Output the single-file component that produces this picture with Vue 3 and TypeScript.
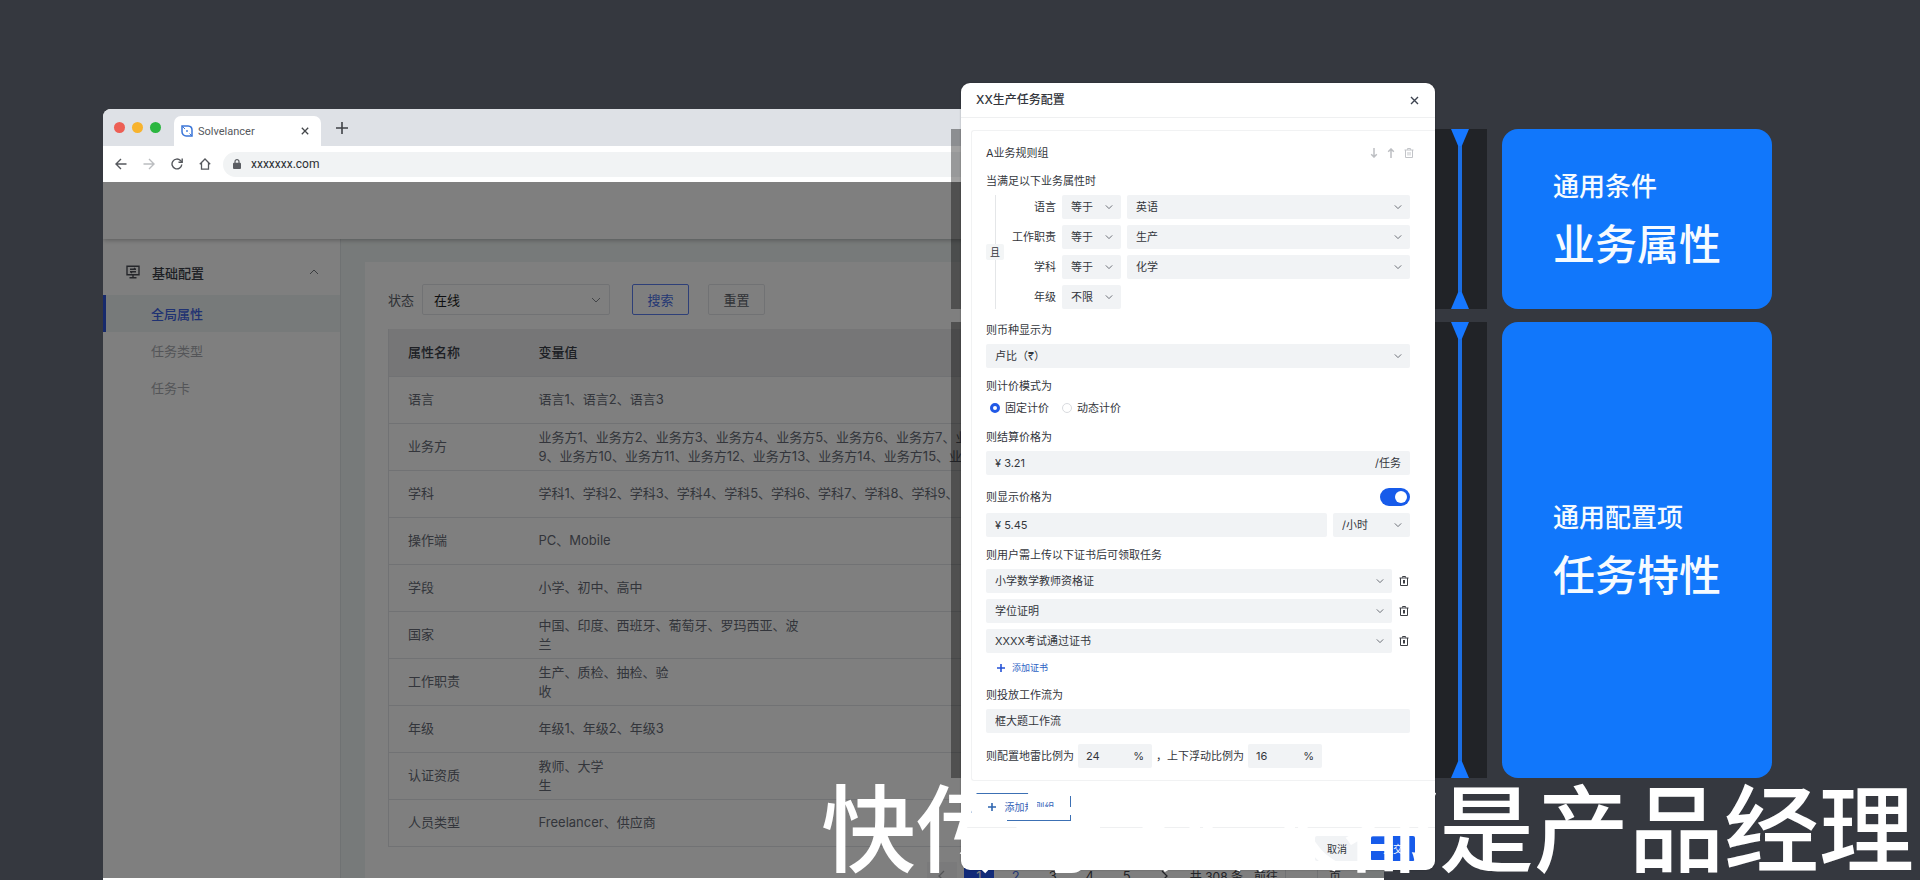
<script setup lang="ts">
import { ref } from 'vue'

interface AttributeRow { name: string; lines: string[] }
interface Condition { id: string; label: string; op: string; value?: string }

const menu = ['全局属性', '任务类型', '任务卡']

const attributes: AttributeRow[] = [
  { name: '语言', lines: ['语言1、语言2、语言3'] },
  {
    name: '业务方',
    lines: [
      '业务方1、业务方2、业务方3、业务方4、业务方5、业务方6、业务方7、业务方8、业务方',
      '9、业务方10、业务方11、业务方12、业务方13、业务方14、业务方15、业务方16',
    ],
  },
  { name: '学科', lines: ['学科1、学科2、学科3、学科4、学科5、学科6、学科7、学科8、学科9、'] },
  { name: '操作端', lines: ['PC、Mobile'] },
  { name: '学段', lines: ['小学、初中、高中'] },
  { name: '国家', lines: ['中国、印度、西班牙、葡萄牙、罗玛西亚、波', '兰'] },
  { name: '工作职责', lines: ['生产、质检、抽检、验', '收'] },
  { name: '年级', lines: ['年级1、年级2、年级3'] },
  { name: '认证资质', lines: ['教师、大学', '生'] },
  { name: '人员类型', lines: ['Freelancer、供应商'] },
]

const conditions: Condition[] = [
  { id: 'lang', label: '语言', op: '等于', value: '英语' },
  { id: 'duty', label: '工作职责', op: '等于', value: '生产' },
  { id: 'subject', label: '学科', op: '等于', value: '化学' },
  { id: 'grade', label: '年级', op: '不限' },
]

const certificates = ['小学数学教师资格证', '学位证明', 'XXXX考试通过证书']
const pages = [1, 2, 3, 4, 5]

const pricing = ref('fixed')
const showPrice = ref(true)
</script>

<template>
  <main class="stage">
    <section class="browser">
      <div class="tabs">
        <span class="light red"></span><span class="light yellow"></span><span class="light green"></span>
        <div class="tab">
          <svg class="favicon" viewBox="0 0 12 12" fill="none" stroke="#3b76d8" stroke-width="1.5">
            <path d="M1 1h6.2A4 4 0 0 1 11 5v6H5.2A4.2 4.2 0 0 1 1 6.800z" />
            <path d="M1 1l3 3M8.500 8.500l2.500 2.500" stroke-width="1" />
            <circle cx="6" cy="6" r=".9" fill="#3b76d8" stroke="none" />
          </svg>
          <span class="tab-title">Solvelancer</span>
          <button class="bare" aria-label="关闭标签页">
            <svg width="8" height="8" viewBox="0 0 8 8" stroke="#44474b" stroke-width="1.3"><path d="M.8.8l6.400 6.400M7.200.8L.8 7.200" /></svg>
          </button>
        </div>
        <button class="bare" aria-label="新建标签页">
          <svg width="12" height="12" viewBox="0 0 12 12" stroke="#3f4247" stroke-width="1.600"><path d="M6 0v12M0 6h12" /></svg>
        </button>
      </div>
      <div class="toolbar">
        <button class="bare" aria-label="后退">
          <svg width="12" height="12" viewBox="0 0 12 12" fill="none" stroke="#55585d" stroke-width="1.400"><path d="M11.500 6H1.200M6 1L1 6l5 5" /></svg>
        </button>
        <button class="bare" aria-label="前进">
          <svg width="12" height="12" viewBox="0 0 12 12" fill="none" stroke="#bbbdc0" stroke-width="1.400"><path d="M.5 6h10.300M6 1l5 5-5 5" /></svg>
        </button>
        <button class="bare" aria-label="刷新">
          <svg width="12" height="12" viewBox="0 0 12 12" fill="none" stroke="#55585d" stroke-width="1.400"><path d="M10.800 6.500A4.900 4.900 0 1 1 9.500 2.600L11 4" /><path d="M11.200.5v3.700H7.500" /></svg>
        </button>
        <button class="bare" aria-label="主页">
          <svg width="12" height="12" viewBox="0 0 12 12" fill="none" stroke="#55585d" stroke-width="1.300"><path d="M.8 6.200L6 1l5.200 5.200M2.500 5v6.200h7V5" /></svg>
        </button>
        <div class="address">
          <svg width="8" height="10" viewBox="0 0 8 10"><rect y="3.800" width="8" height="6.200" rx="1" fill="#5a5d62" /><path d="M2 4V2.700a2 2 0 0 1 4 0V4" fill="none" stroke="#5a5d62" stroke-width="1.200" /></svg>
          <input aria-label="地址" value="xxxxxxx.com" />
        </div>
      </div>

      <div class="page">
        <header class="page-head"></header>
        <div class="page-body">
          <nav class="side">
            <button class="side-group">
              <svg width="14" height="14" viewBox="0 0 14 14" fill="none" stroke="#4c4f57" stroke-width="1.400"><path d="M1 1.200h12v8.600H1zM4 4.200h6M4 6.800h6M7 10v2.500M3.500 12.800h7M8 3l1.500 1.200M6 8L4.500 6.800" /></svg>
              <span>基础配置</span>
              <svg class="up" width="10" height="6" viewBox="0 0 10 6" fill="none" stroke="#777a80"><path d="M1 5l4-4 4 4" /></svg>
            </button>
            <a v-for="(item, i) in menu" :key="item" href="#" :class="['side-link', { active: i === 0 }]">{{ item }}</a>
          </nav>
          <div class="panel">
            <form class="filter" @submit.prevent>
              <label for="status">状态</label>
              <div class="pick status">
                <select id="status"><option>在线</option></select>
                <svg width="10" height="6" viewBox="0 0 10 6"><path d="M1 1l4 4 4-4" /></svg>
              </div>
              <button class="btn primary" type="submit">搜索</button>
              <button class="btn" type="reset">重置</button>
            </form>
            <table>
              <thead>
                <tr><th scope="col">属性名称</th><th scope="col">变量值</th></tr>
              </thead>
              <tbody>
                <tr v-for="row in attributes" :key="row.name">
                  <td>{{ row.name }}</td>
                  <td><div v-for="line in row.lines" :key="line">{{ line }}</div></td>
                </tr>
              </tbody>
            </table>
            <div class="pager">
              <button class="pg faint" aria-label="上一页"><svg width="8" height="12" viewBox="0 0 8 12"><path d="M6 1L1 6l5 5" /></svg></button>
              <button v-for="n in pages" :key="n" :class="['pg', { current: n === 1, next: n === 2 }]">{{ n }}</button>
              <button class="pg" aria-label="下一页"><svg width="8" height="12" viewBox="0 0 8 12"><path d="M2 1l5 5-5 5" /></svg></button>
              <span>共 308 条</span>
              <label for="goto">前往</label>
              <input id="goto" />
              <span>页</span>
            </div>
          </div>
        </div>
      </div>
    </section>

    <div class="bands">
      <div class="band short"><i class="tri down"></i><i class="stem"></i><i class="tri"></i></div>
      <div class="band tall"><i class="tri down"></i><i class="stem"></i><i class="tri"></i></div>
    </div>

    <div class="cards">
      <article class="card short"><p>通用条件</p><h2>业务属性</h2></article>
      <article class="card tall"><p>通用配置项</p><h2>任务特性</h2></article>
    </div>

    <section class="dialog" role="dialog" aria-labelledby="dialog-title">
      <header class="dialog-head">
        <h1 id="dialog-title">XX生产任务配置</h1>
        <button class="bare" aria-label="关闭">
          <svg width="9" height="9" viewBox="0 0 9 9" stroke="#3d4350" stroke-width="1.400"><path d="M1 1l7 7M8 1L1 8" /></svg>
        </button>
      </header>

      <div class="group">
        <div class="group-head">
          <h3>A业务规则组</h3>
          <button class="bare" aria-label="下移"><svg width="8" height="10" viewBox="0 0 8 10" fill="none" stroke="#bcbec2" stroke-width="1.500"><path d="M4 0v9M1.200 6.200L4 9l2.800-2.800" /></svg></button>
          <button class="bare" aria-label="上移"><svg width="8" height="10" viewBox="0 0 8 10" fill="none" stroke="#bcbec2" stroke-width="1.500"><path d="M4 10V1M1.200 3.800L4 1l2.800 2.800" /></svg></button>
          <button class="bare" aria-label="删除规则组"><svg width="10" height="10" viewBox="0 0 10 10" fill="none" stroke="#c2c4c8"><path d="M.5 2h9M3.500 1.800V.5h3v1.300M1.500 2v7.500h7V2M4 4v3.500M6 4v3.500" /></svg></button>
        </div>

        <p class="label">当满足以下业务属性时</p>
        <div class="rules">
          <div class="join"><span>且</span></div>
          <div class="rule-list">
            <div v-for="c in conditions" :key="c.id" class="rule">
              <label :for="c.id">{{ c.label }}</label>
              <div class="pick op">
                <select :id="c.id"><option>{{ c.op }}</option></select>
                <svg width="8" height="6" viewBox="0 0 10 6"><path d="M1 1l4 4 4-4" /></svg>
              </div>
              <div v-if="c.value" class="pick grow">
                <select :aria-label="c.label + '取值'"><option>{{ c.value }}</option></select>
                <svg width="8" height="6" viewBox="0 0 10 6"><path d="M1 1l4 4 4-4" /></svg>
              </div>
            </div>
          </div>
        </div>

        <div class="field">
          <label class="label" for="currency">则币种显示为</label>
          <div class="pick">
            <select id="currency"><option>卢比（₹）</option></select>
            <svg width="8" height="6" viewBox="0 0 10 6"><path d="M1 1l4 4 4-4" /></svg>
          </div>
        </div>

        <fieldset class="field tight">
          <legend class="label">则计价模式为</legend>
          <div class="radios">
            <label><input v-model="pricing" type="radio" name="pricing" value="fixed" />固定计价</label>
            <label><input v-model="pricing" type="radio" name="pricing" value="dynamic" />动态计价</label>
          </div>
        </fieldset>

        <div class="field">
          <label class="label" for="settle">则结算价格为</label>
          <div class="text-box"><input id="settle" value="¥ 3.21" /><span>/任务</span></div>
        </div>

        <div class="field">
          <div class="switch-row">
            <label for="show-price">则显示价格为</label>
            <input id="show-price" v-model="showPrice" class="switch" type="checkbox" role="switch" />
          </div>
          <div class="pair">
            <div class="text-box grow"><input aria-label="显示价格" value="¥ 5.45" /></div>
            <div class="pick unit">
              <select aria-label="计价单位"><option>/小时</option></select>
              <svg width="8" height="6" viewBox="0 0 10 6"><path d="M1 1l4 4 4-4" /></svg>
            </div>
          </div>
        </div>

        <div class="field tight">
          <p class="label">则用户需上传以下证书后可领取任务</p>
          <div class="certs">
            <div v-for="cert in certificates" :key="cert" class="cert">
              <div class="pick grow">
                <select aria-label="证书"><option>{{ cert }}</option></select>
                <svg width="8" height="6" viewBox="0 0 10 6"><path d="M1 1l4 4 4-4" /></svg>
              </div>
              <button class="bare" aria-label="删除证书"><svg width="10" height="10" viewBox="0 0 10 10" fill="none" stroke="#3c3f45"><path d="M.5 2h9M3.500 1.500V.5h3v1M1.500 2v7.500h7V2M4.500 4v3.500M5.500 4v3.500" /></svg></button>
            </div>
            <button class="add-cert">
              <svg width="8" height="8" viewBox="0 0 8 8" stroke="#2452d6" stroke-width="1.600"><path d="M4 0v8M0 4h8" /></svg>添加证书
            </button>
          </div>
        </div>

        <div class="field tight">
          <label class="label" for="flow">则投放工作流为</label>
          <div class="text-box"><input id="flow" value="框大题工作流" /></div>
        </div>

        <div class="field ratio">
          <label for="mine">则配置地雷比例为</label>
          <div class="text-box percent"><input id="mine" value="24" /><span>%</span></div>
          <label for="drift"><span>，</span>上下浮动比例为</label>
          <div class="text-box percent"><input id="drift" value="16" /><span>%</span></div>
        </div>
      </div>

      <button class="add-group">
        <svg width="8" height="8" viewBox="0 0 8 8" stroke="#2f66b0" stroke-width="1.600"><path d="M4 0v8M0 4h8" /></svg>添加规则组
      </button>

      <footer class="dialog-foot">
        <button>取消</button>
        <button class="submit">提交</button>
      </footer>
    </section>

    <p class="caption"><span>快传号</span><span class="dot">·</span><span>人人都是产品经理</span></p>
  </main>
</template>

<style>
body {
  margin: 0;
  background: #35383f;
}
</style>

<style scoped>
* {
  box-sizing: border-box;
}

.stage {
  display: grid;
  grid-template-columns:
    minmax(0, 103fr) minmax(0, 848fr) minmax(0, 10fr) minmax(0, 423fr) minmax(0, 51fr)
    minmax(0, 52fr) minmax(0, 15fr) minmax(0, 270fr) minmax(0, 148fr);
  grid-template-rows: minmax(0, 1fr);
  height: 100vh;
  overflow: hidden;
  background: #35383f;
  font-family: Inter, "Noto Sans CJK SC", sans-serif;
  font-size: 13px;
  color: #33363c;
}

p, h1, h2, h3 {
  margin: 0;
  font-weight: 400;
}

button, input, select {
  margin: 0;
  padding: 0;
  border: 0;
  background: none;
  font: inherit;
  color: inherit;
  outline: none;
  min-width: 0;
}

svg {
  display: block;
  flex: none;
}

.bare {
  display: grid;
  place-items: center;
}

.grow {
  flex: 1;
}

/* browser window */
.browser {
  grid-area: 1 / 2 / 2 / 5;
  display: flex;
  flex-direction: column;
  margin-top: 109px;
  padding-bottom: 2px;
  border-radius: 8px 8px 0 0;
  overflow: hidden;
  background: #fff;
}

.tabs {
  flex: none;
  display: flex;
  align-items: center;
  gap: 7px;
  height: 37px;
  padding-left: 11px;
  background: #dee1e6;
}

.light {
  width: 11px;
  height: 11px;
  border-radius: 50%;
}

.red { background: #ed5f55; }
.yellow { background: #f7b32e; }
.green { background: #2bb640; }

.tab {
  align-self: flex-end;
  display: flex;
  align-items: center;
  gap: 5px;
  width: 147px;
  height: 30px;
  margin: 0 8px 0 6px;
  padding: 0 12px 0 7px;
  border-radius: 7px 7px 0 0;
  background: #fff;
  font-family: Roboto, sans-serif;
  font-size: 11px;
  color: #55585d;
}

.tab-title {
  flex: 1;
}

.favicon {
  width: 12px;
  height: 12px;
}

.toolbar {
  flex: none;
  display: flex;
  align-items: center;
  gap: 16px;
  height: 36px;
  padding-left: 12px;
}

.address {
  flex: 1;
  display: flex;
  align-items: center;
  gap: 10px;
  height: 25px;
  margin-left: -4px;
  padding-left: 10px;
  border-radius: 13px 0 0 13px;
  background: #f1f3f4;
  font-family: Roboto, sans-serif;
  font-size: 12px;
  color: #2c2f33;
}

.page {
  position: relative;
  flex: 1;
  min-height: 0;
  display: flex;
  flex-direction: column;
  overflow: hidden;
}

.page::after {
  content: "";
  position: absolute;
  inset: 0;
  background: rgba(0, 0, 0, 0.5);
  z-index: 2;
}

.page-head {
  flex: none;
  height: 57px;
  background: #fff;
  box-shadow: 0 1px 5px rgba(0, 0, 0, 0.3);
  z-index: 1;
}

.page-body {
  flex: 1;
  min-height: 0;
  display: flex;
  background: #eff5f4;
}

.side {
  flex: none;
  width: 238px;
  padding-top: 10px;
  border-right: 1px solid #dfe4e6;
  background: #fff;
}

.side-group {
  display: flex;
  align-items: center;
  gap: 12px;
  width: 100%;
  height: 46px;
  padding: 0 21px 0 23px;
  font-weight: 500;
  color: #3a3e48;
}

.up {
  margin-left: auto;
}

.side-link {
  display: flex;
  align-items: center;
  height: 37px;
  padding-left: 45px;
  border-left: 3px solid transparent;
  color: #a8abb0;
  text-decoration: none;
}

.side-link.active {
  border-color: #2f55d8;
  background: #eff5f4;
  font-weight: 500;
  color: #3f64e4;
}

.panel {
  flex: 1;
  min-width: 0;
  margin: 23px 24px 0;
  padding: 22px 19px 0 23px;
  background: #fff;
}

.filter {
  display: flex;
  align-items: center;
  height: 31px;
  color: #60646c;
}

.pick {
  display: grid;
  align-items: center;
  height: 24px;
  border-radius: 2px;
  background: #f1f3f5;
}

.pick select, .pick svg {
  grid-area: 1 / 1;
}

.pick select {
  width: 100%;
  height: 100%;
  padding: 0 20px 0 9px;
  appearance: none;
}

.pick svg {
  justify-self: end;
  margin-right: 8px;
  fill: none;
  stroke: #666a72;
  stroke-width: 1.2;
  pointer-events: none;
}

.status {
  width: 188px;
  height: 31px;
  margin: 0 22px 0 8px;
  border: 1px solid #e3e5e9;
  background: #fff;
  color: #1c1e22;
}

.status select {
  padding-left: 11px;
}

.status svg {
  stroke: #85888f;
  stroke-width: 1;
}

.btn {
  width: 57px;
  height: 31px;
  margin-right: 19px;
  border: 1px solid #e3e5e9;
  border-radius: 2px;
}

.primary {
  border-color: #5c7ff0;
  color: #4a70e8;
}

table {
  width: 100%;
  margin-top: 14px;
  border-collapse: collapse;
  table-layout: fixed;
  border-left: 1px solid #e2e4e8;
  color: #666b76;
}

th, td {
  height: 47px;
  padding: 0 0 0 19px;
  border-bottom: 1px solid #e2e4e8;
  text-align: left;
  line-height: 19px;
  white-space: nowrap;
  overflow: hidden;
}

th {
  background: #ecedef;
  font-weight: 500;
  color: #3a3e48;
}

th:first-child {
  width: 131px;
}

.pager {
  display: flex;
  align-items: center;
  justify-content: flex-end;
  gap: 7px;
  height: 28px;
  margin-top: 15px;
  font-size: 12px;
  color: #44474e;
}

.pg {
  display: grid;
  place-items: center;
  width: 30px;
  height: 28px;
  font-size: 13px;
}

.pg svg {
  fill: none;
  stroke: currentColor;
  stroke-width: 1.3;
}

.faint {
  background: #f4f5f6;
  color: #a8abb0;
}

.current {
  background: #2457f2;
  color: #fff;
}

.next {
  color: #4a70e8;
}

.pager span, .pager label {
  margin-left: 4px;
}

.pager input {
  width: 33px;
  height: 28px;
  border: 1px solid #e2e4e8;
}

/* connectors behind the dialog and the blue cards */
.bands, .cards {
  grid-row: 1;
  display: flex;
  flex-direction: column;
  gap: 13px;
  margin-top: 129px;
  z-index: 1;
}

.bands { grid-column: 3 / 7; }
.cards { grid-column: 8; }
.short { min-height: 180px; }
.tall { min-height: 456px; }

.band {
  display: flex;
  flex-direction: column;
  align-items: flex-end;
  padding-right: 18px;
  background: rgba(0, 0, 0, 0.37);
}

.tri {
  width: 18px;
  height: 17px;
  background: #1677ff;
  clip-path: polygon(40% 0, 60% 0, 100% 100%, 0 100%);
}

.tri.down {
  clip-path: polygon(0 0, 100% 0, 60% 100%, 40% 100%);
}

.stem {
  flex: 1;
  width: 4px;
  margin-right: 7px;
  background: #1c6ee2;
}

.card {
  display: flex;
  flex-direction: column;
  justify-content: center;
  gap: 10px;
  padding: 6px 0 0 51px;
  border-radius: 16px;
  background: #1177fb;
  color: #f6fbff;
}

.card p {
  font-size: 26px;
  line-height: 36px;
  font-weight: 500;
}

.card h2 {
  font-size: 42px;
  line-height: 60px;
  font-weight: 500;
}

/* dialog */
.dialog {
  grid-area: 1 / 4 / 2 / 6;
  align-self: start;
  margin-top: 83px;
  border-radius: 9px;
  overflow: hidden;
  background: #fff;
  box-shadow: 0 0 2px rgba(0, 0, 0, 0.3);
  font-size: 11px;
  line-height: 16px;
  z-index: 2;
}

.dialog-head {
  display: flex;
  align-items: center;
  justify-content: space-between;
  height: 35px;
  padding: 0 16px 0 15px;
  border-bottom: 1px solid #eff0f1;
}

.dialog-head h1 {
  font-size: 12px;
  font-weight: 500;
}

.group {
  margin: 12px 0 0 10px;
  padding: 10px 25px 12px 14px;
  border: 1px solid #f1f2f3;
  border-right: 0;
  border-radius: 3px 0 0 3px;
}

.group-head {
  display: flex;
  align-items: center;
  gap: 9px;
  height: 24px;
  margin: 0 -4px 8px 0;
}

.group-head h3 {
  flex: 1;
  font-size: 11px;
}

.label {
  display: block;
  padding: 0;
  margin-bottom: 6px;
}

.rules {
  display: flex;
}

.join {
  display: grid;
  place-items: center;
  width: 18px;
  background: linear-gradient(#e4e6e8, #e4e6e8) center / 1px 100% no-repeat;
}

.join span {
  width: 18px;
  border-radius: 2px;
  background: #f3f5f6;
  text-align: center;
  font-size: 10px;
}

.rule-list {
  flex: 1;
  display: flex;
  flex-direction: column;
  gap: 6px;
}

.rule {
  display: flex;
  align-items: center;
  gap: 6px;
}

.rule label {
  width: 52px;
  text-align: right;
}

.op {
  width: 59px;
}

.op select {
  padding-right: 0;
}

.field {
  min-width: 0;
  margin: 13px 0 0;
  padding: 0;
  border: 0;
}

.field.tight {
  margin-top: 10px;
}

.radios {
  display: flex;
  gap: 13px;
  padding-left: 4px;
}

.radios label {
  display: flex;
  align-items: center;
  gap: 5px;
}

.radios input {
  width: 10px;
  height: 10px;
  border: 1px solid #d9dbdf;
  border-radius: 50%;
  appearance: none;
}

.radios input:checked {
  border: 3px solid #2159e6;
}

.text-box {
  display: flex;
  align-items: center;
  height: 24px;
  padding: 0 9px;
  border-radius: 2px;
  background: #f1f3f5;
}

.text-box input {
  flex: 1;
  width: 0;
}

.switch-row {
  display: flex;
  align-items: center;
  justify-content: space-between;
  height: 18px;
  margin-bottom: 7px;
}

.switch {
  display: flex;
  align-items: center;
  justify-content: flex-start;
  width: 30px;
  height: 18px;
  padding: 3px;
  border-radius: 9px;
  background: #c5c8ce;
  appearance: none;
}

.switch::before {
  content: "";
  width: 12px;
  height: 12px;
  border-radius: 50%;
  background: #fff;
}

.switch:checked {
  justify-content: flex-end;
  background: #175bea;
}

.pair {
  display: flex;
  gap: 6px;
}

.unit {
  width: 77px;
}

.certs {
  display: flex;
  flex-direction: column;
  gap: 6px;
}

.cert {
  display: flex;
  gap: 7px;
  padding-right: 1px;
}

.add-cert {
  display: flex;
  align-items: center;
  align-self: flex-start;
  gap: 7px;
  height: 18px;
  padding-left: 11px;
  font-size: 9px;
  color: #2d62c4;
}

.ratio {
  display: flex;
  align-items: center;
  gap: 4px;
}

.field.ratio {
  margin-top: 11px;
}

.percent {
  width: 74px;
  padding: 0 8px;
}

.add-group {
  display: flex;
  align-items: center;
  justify-content: center;
  gap: 9px;
  width: 100px;
  height: 28px;
  margin: 12px 0 6px 10px;
  border: 1px solid #3c70b4;
  font-size: 10px;
  color: #3563b8;
}

.dialog-foot {
  display: flex;
  justify-content: flex-end;
  gap: 12px;
  padding: 8px 20px 9px 0;
  border-top: 1px solid #eff0f1;
}

.dialog-foot button {
  width: 44px;
  height: 25px;
  border-radius: 2px;
  background: #f1f3f5;
  font-size: 10px;
}

.dialog-foot .submit {
  background: #175bea;
  color: #fff;
}

/* subtitle over the scene */
.caption {
  grid-area: 1 / 1 / 2 / -1;
  display: flex;
  align-self: end;
  justify-self: end;
  margin: 0 6px 9px 0;
  font-family: "Noto Sans CJK SC", sans-serif;
  font-size: 95px;
  line-height: 95px;
  font-weight: 500;
  color: #fff;
  white-space: nowrap;
  pointer-events: none;
  z-index: 3;
}

.dot {
  width: 48px;
  text-align: center;
}
</style>
